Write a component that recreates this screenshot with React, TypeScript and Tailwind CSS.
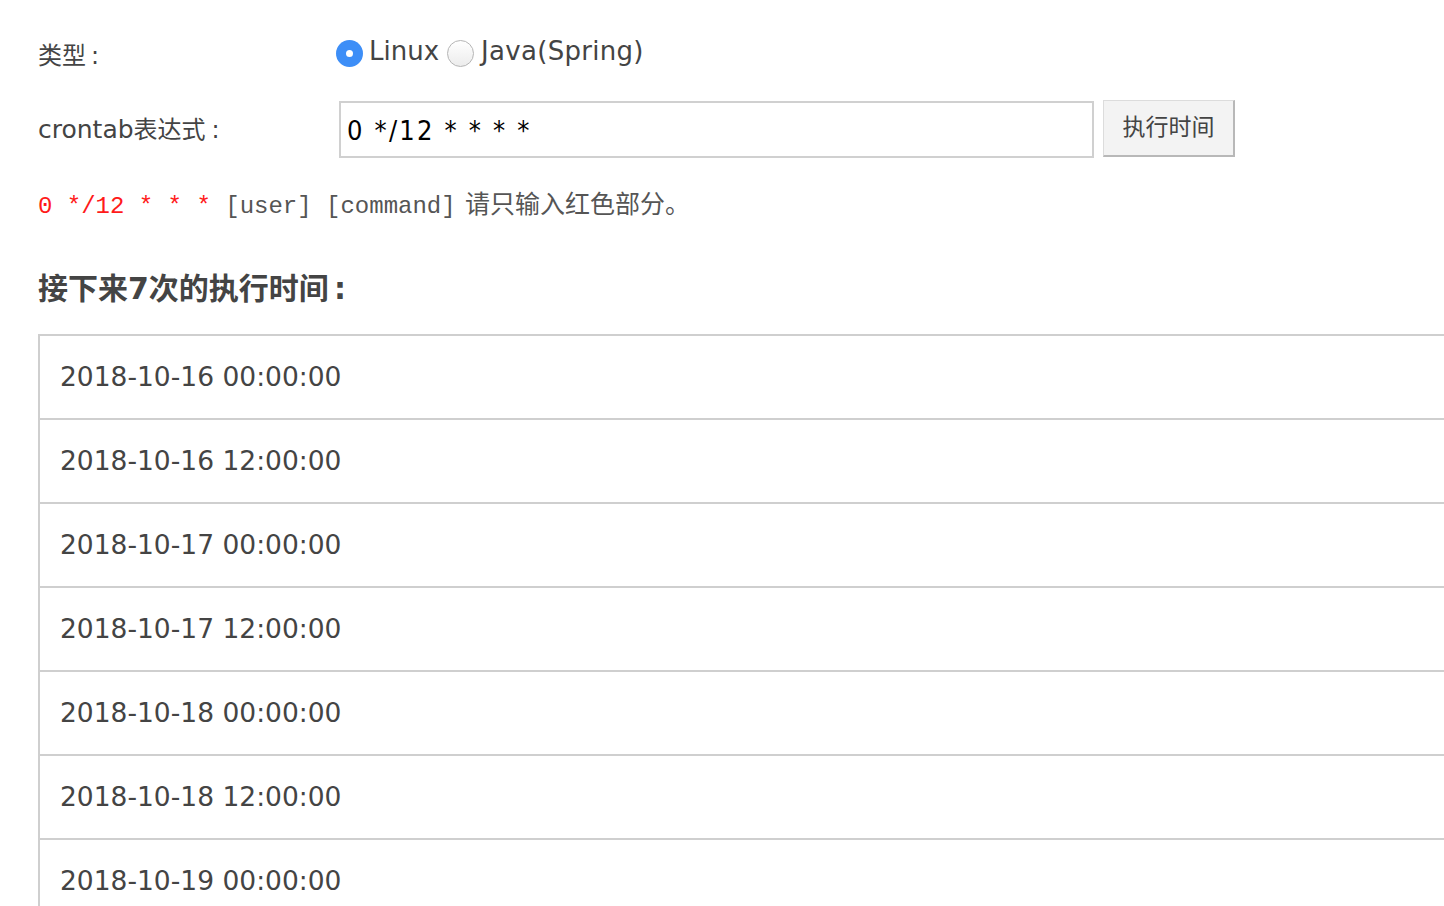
import { useState } from 'react'

const times = [
  '2018-10-16 00:00:00',
  '2018-10-16 12:00:00',
  '2018-10-17 00:00:00',
  '2018-10-17 12:00:00',
  '2018-10-18 00:00:00',
  '2018-10-18 12:00:00',
  '2018-10-19 00:00:00',
]

const sans = 'font-["DejaVu_Sans","Noto_Sans_CJK_SC",sans-serif]'

function Radio({ checked }: { checked: boolean }) {
  if (checked) {
    return (
      <span className="w-[27px] h-[27px] rounded-full bg-[#3d8ef7] flex items-center justify-center shrink-0">
        <span className="w-[7px] h-[7px] rounded-full bg-white" />
      </span>
    )
  }
  return (
    <span className="w-[27px] h-[27px] rounded-full border border-[#b5b5b5] bg-gradient-to-b from-white to-[#ececec] shrink-0" />
  )
}

export default function App() {
  const [type, setType] = useState<'linux' | 'java'>('linux')
  const [expr, setExpr] = useState('0 */12 * * * *')

  return (
    <div className={`w-screen min-h-screen overflow-hidden bg-white text-[#444] ${sans}`}>
      <div className="pl-[38px] pt-[36px]">
        {/* 类型 */}
        <div className="flex items-center h-[34px]">
          <div className="w-[298px] text-[24px] pt-[6px]">
            类型<span className="ml-[5px]">:</span>
          </div>
          <label className="flex items-center gap-[6px] cursor-pointer" onClick={() => setType('linux')}>
            <Radio checked={type === 'linux'} />
            <span className="text-[26px] leading-none -mt-[4px]">Linux</span>
          </label>
          <label className="flex items-center gap-[7px] ml-[8px] cursor-pointer" onClick={() => setType('java')}>
            <Radio checked={type === 'java'} />
            <span className="text-[26px] tracking-[0.3px] leading-none -mt-[4px]">Java(Spring)</span>
          </label>
        </div>

        {/* crontab表达式 */}
        <div className="flex items-center mt-[31px]">
          <div className="w-[301px] text-[24px]">
            <span className="text-[25px]">crontab</span>表达式<span className="ml-[6px]">:</span>
          </div>
          <input
            value={expr}
            onChange={(e) => setExpr(e.target.value)}
            className='w-[755px] h-[57px] border-2 border-[#d0d0d0] px-[6px] pt-[2px] text-[27px] tracking-[2.2px] text-black outline-none font-["DejaVu_Sans_Condensed","DejaVu_Sans",sans-serif] [font-stretch:condensed]'
          />
          <button className="ml-[9px] -mt-[3px] w-[132px] h-[57px] bg-[#f3f3f3] border border-[#dcdcdc] border-b-2 border-r-2 border-b-[#b8b8b8] border-r-[#b8b8b8] text-[23px] text-[#444]">
            执行时间
          </button>
        </div>

        {/* 提示 */}
        <div className="mt-[29px] flex items-baseline text-[24px] leading-[36px]">
          <span className='font-["Liberation_Mono",monospace] text-[#ff1a1a] whitespace-pre'>0 */12 * * * </span>
          <span className='font-["Liberation_Mono",monospace] text-[#555] whitespace-pre'>[user] [command] </span>
          <span className="text-[#555] text-[25px] -ml-[5px]">请只输入红色部分。</span>
        </div>

        {/* 接下来7次的执行时间 */}
        <h2 className="mt-[43px] text-[30px] leading-[42px] font-bold text-[#444]">
          接下来7次的执行时间<span className="ml-[5px]">:</span>
        </h2>

        <ul className="mt-[24px] w-[1440px] border-l-2 border-t-2 border-[#cfcfcf]">
          {times.map((t) => (
            <li key={t} className="h-[84px] border-b-2 border-[#cfcfcf] flex items-center pl-[20px] text-[26.5px] text-[#444]">
              {t}
            </li>
          ))}
        </ul>
      </div>
    </div>
  )
}
